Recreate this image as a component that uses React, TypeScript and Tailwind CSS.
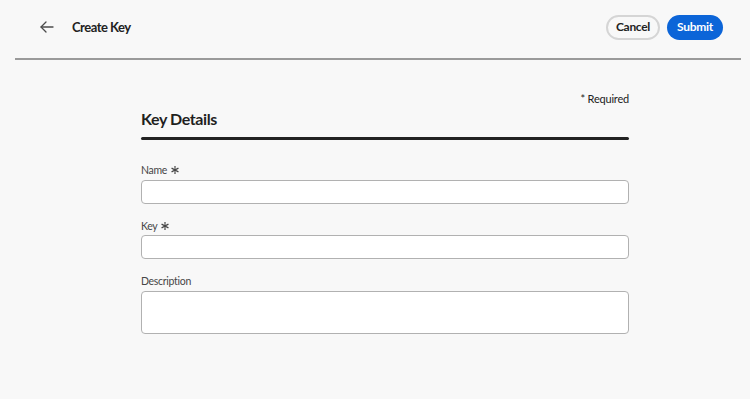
import React from "react";

function Star() {
  return (
    <svg className="ml-[4px] inline-block align-[0px]" width="8" height="8" viewBox="0 0 10 10" fill="currentColor">
      <path d="M4.2 0h1.6l-.2 3.7 3.3-1.7.8 1.4-3.2 1.6 3.2 1.6-.8 1.4-3.3-1.7.2 3.7H4.2l.2-3.7-3.3 1.7-.8-1.4 3.2-1.6L.3 3.4l.8-1.4 3.3 1.7z" />
    </svg>
  );
}

export default function App() {
  const font = { fontFamily: '"Lato", "Noto Sans", sans-serif' };
  return (
    <div className="min-h-[399px] w-[750px] bg-[#f8f8f8] text-[#222]" style={font}>
      <div className="ml-[15px] mr-[9px] h-[54px] pb-[4px] border-b-2 border-[#9a9a9a] box-content flex items-center">
        <div className="ml-[25px] flex h-[14px] w-[14px] items-center justify-center text-[#4b4b4b]">
          <svg width="14" height="12" viewBox="0 0 14 12" fill="none" stroke="currentColor" strokeWidth="1.3" strokeLinecap="round" strokeLinejoin="round">
            <path d="M13 6H1.2" />
            <path d="M6 1 1 6l5 5" />
          </svg>
        </div>
        <div className="ml-[18px] text-[13px] font-bold leading-[18px] tracking-[-0.5px] text-[#222]">Create Key</div>
        <div className="ml-auto mr-[18px] flex items-center gap-[7px]">
          <button className="h-[25px] w-[54px] rounded-full border-2 border-[#d5d5d5] bg-[#f8f8f8] text-[12px] font-bold leading-none tracking-[-0.3px] text-[#222]">
            Cancel
          </button>
          <button className="h-[25px] w-[56px] rounded-full bg-[#0c65d8] text-[12px] font-bold leading-none tracking-[-0.3px] text-white">
            Submit
          </button>
        </div>
      </div>
      <div className="ml-[141px] w-[488px] pt-[31px]">
        <div className="text-right text-[11px] leading-[16px] tracking-[-0.2px] text-[#222]">* Required</div>
        <div className="mt-[1px] text-[16px] font-bold leading-[22px] tracking-[-0.4px] text-[#1f1f1f]">Key Details</div>
        <div className="mt-[7px] h-[3px] rounded-full bg-[#222]" />
        <div className="mt-[22px] text-[10.5px] leading-[16px] tracking-[-0.3px] text-[#464646]">Name<Star /></div>
        <div className="mt-[2px] h-[24px] rounded-[4px] border border-[#b1b1b1] bg-white" />
        <div className="mt-[14px] text-[10.5px] leading-[16px] tracking-[-0.3px] text-[#464646]">Key<Star /></div>
        <div className="mt-[1px] h-[24px] rounded-[4px] border border-[#b1b1b1] bg-white" />
        <div className="mt-[14px] text-[10.5px] leading-[16px] tracking-[-0.3px] text-[#464646]">Description</div>
        <div className="mt-[2px] h-[43px] rounded-[4px] border border-[#b1b1b1] bg-white" />
      </div>
    </div>
  );
}
